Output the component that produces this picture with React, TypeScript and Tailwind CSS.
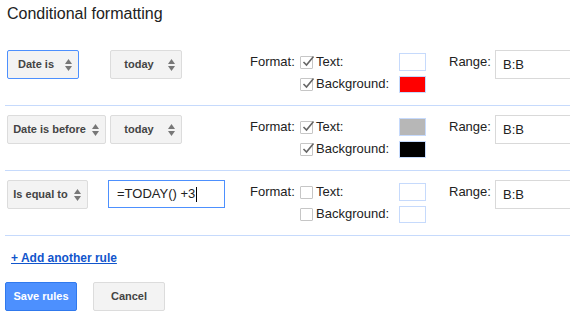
import React from 'react'

const Arrows: React.FC = () => (
  <svg width="7" height="12" viewBox="0 0 7 12" className="absolute right-[6px] top-1/2 -translate-y-1/2">
    <polygon points="0,5 3.5,0 7,5" fill="#777" />
    <polygon points="0,7 3.5,12 7,7" fill="#777" />
  </svg>
)

const Select: React.FC<{ label: string; width: string; focused?: boolean; extra?: string }> = ({ label, width, focused, extra }) => (
  <div
    className={`relative h-[29px] ${width} ${extra ?? ''} flex items-center justify-center pr-[14px] rounded-[2px] border bg-[#f3f3f3] text-[11px] font-bold text-[#444] ${
      focused ? 'border-[#4d90fe]' : 'border-[#dcdcdc]'
    }`}
  >
    <span>{label}</span>
    <Arrows />
  </div>
)

const Checkbox: React.FC<{ checked: boolean }> = ({ checked }) => (
  <div className="relative w-[13px] h-[13px] border border-[#c6c6c6] bg-white rounded-[1px] shrink-0">
    {checked && (
      <svg width="15" height="15" viewBox="0 0 15 15" className="absolute -top-[3px] left-0 overflow-visible">
        <path d="M2.5 8 L5.5 11 L12.5 2.5" fill="none" stroke="#666" strokeWidth="1.6" />
      </svg>
    )}
  </div>
)

const Swatch: React.FC<{ color: string; h: string }> = ({ color, h }) => (
  <div className={`w-[27px] ${h} border border-[#c6dafc] ${color}`} />
)

type Rule = {
  first: React.ReactNode
  second: React.ReactNode
  textOn: boolean
  bgOn: boolean
  textColor: string
  bgColor: string
}

const rules: Rule[] = [
  {
    first: <Select label="Date is" width="w-[72px]" focused />,
    second: <Select label="today" width="w-[72px]" extra="ml-[2px]" />,
    textOn: true,
    bgOn: true,
    textColor: 'bg-white',
    bgColor: 'bg-[#ff0000]',
  },
  {
    first: <Select label="Date is before" width="w-[99px]" />,
    second: <Select label="today" width="w-[72px]" extra="ml-[2px]" />,
    textOn: true,
    bgOn: true,
    textColor: 'bg-[#b7b7b7]',
    bgColor: 'bg-black',
  },
  {
    first: <Select label="Is equal to" width="w-[81px]" />,
    second: (
      <div className="h-[28px] w-[117px] border border-[#4d90fe] bg-white flex items-center pl-[8px] text-[13px] text-[#222]">
        <span>=TODAY() +3</span>
        <span className="ml-[1px] w-[1px] h-[15px] bg-black" />
      </div>
    ),
    textOn: false,
    bgOn: false,
    textColor: 'bg-white',
    bgColor: 'bg-white',
  },
]

const RuleRow: React.FC<{ rule: Rule }> = ({ rule }) => (
  <div className="ml-[5px] h-[65px] border-b border-[#c6dafc] pt-[9px] pl-[2px] grid grid-cols-[101px_142px_199px_46px_1fr] items-start">
    <div>{rule.first}</div>
    <div>{rule.second}</div>
    <div className="flex mt-[1px] text-[13px] text-[#222]">
      <div className="w-[50px] h-[22px] flex items-center">Format:</div>
      <div className="flex flex-col">
        <div className="h-[22px] flex items-center">
          <Checkbox checked={rule.textOn} />
          <span className="ml-[3px] w-[83px]">Text:</span>
          <Swatch color={rule.textColor} h="h-[18px]" />
        </div>
        <div className="h-[22px] flex items-center">
          <Checkbox checked={rule.bgOn} />
          <span className="ml-[3px] w-[83px]">Background:</span>
          <Swatch color={rule.bgColor} h="h-[17px]" />
        </div>
      </div>
    </div>
    <div className="mt-[1px] h-[22px] flex items-center text-[13px] text-[#222]">Range:</div>
    <div className="h-[29px] w-[100px] border border-[#d9d9d9] bg-white flex items-center pl-[7px] pt-[1px] text-[13px] text-[#222]">
      B:B
    </div>
  </div>
)

const App: React.FC = () => {
  return (
    <div className="w-[570px] h-[318px] overflow-hidden bg-white font-['Liberation_Sans',Arial,sans-serif]">
      <div className="h-[41px] pt-[4px] pl-[7px] text-[16px] leading-[20px] text-[#222]">Conditional formatting</div>
      {rules.map((r, i) => (
        <RuleRow key={i} rule={r} />
      ))}
      <div className="mt-[13px] pl-[11px] h-[16px] leading-[16px]">
        <a href="#" className="text-[12px] font-bold text-[#1155cc] underline">
          + Add another rule
        </a>
      </div>
      <div className="mt-[17px] ml-[5px] flex gap-[16px]">
        <button className="w-[72px] h-[29px] rounded-[2px] border border-[#3079ed] bg-[#4d90fe] text-white text-[11px] font-bold">
          Save rules
        </button>
        <button className="w-[72px] h-[29px] rounded-[2px] border border-[#dcdcdc] bg-[#f3f3f3] text-[#444] text-[11px] font-bold">
          Cancel
        </button>
      </div>
    </div>
  )
}

export default App
